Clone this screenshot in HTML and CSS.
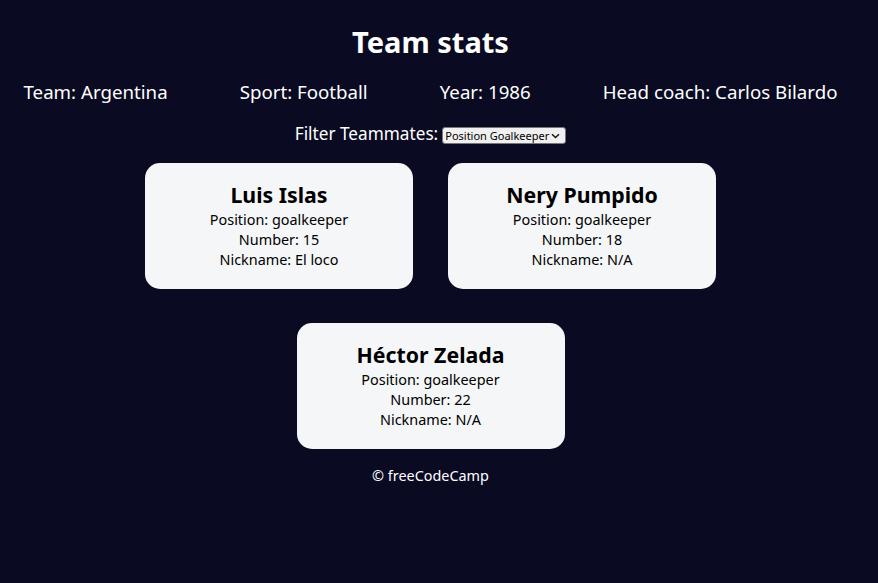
FILE: index.html
```html
<!DOCTYPE html>
<html lang="en">
<head>
<meta charset="utf-8">
<title>Team stats</title>
<link rel="stylesheet" href="styles.css">
</head>
<body>
<div class="page">
  <header class="title-container">
    <h1 class="title">Team stats</h1>
  </header>
  <div class="team-stats">
    <p>Team: <span>Argentina</span></p>
    <p>Sport: <span>Football</span></p>
    <p>Year: <span>1986</span></p>
    <p>Head coach: <span>Carlos Bilardo</span></p>
  </div>
  <div class="filter">
    <label class="options-label" for="players">Filter Teammates:</label>
    <span class="select-wrap">
      <select name="players" id="players" class="select">
        <option value="goalkeeper">Position Goalkeeper</option>
      </select>
      <svg class="chevron" width="9" height="6" viewBox="0 0 9 6" aria-hidden="true"><path d="M1 1.2 L4.5 4.6 L8 1.2" fill="none" stroke="#111" stroke-width="1.4"/></svg>
    </span>
  </div>
  <div class="cards">
    <div class="player-card">
      <h2>Luis Islas</h2>
      <p>Position: goalkeeper</p>
      <p>Number: 15</p>
      <p>Nickname: El loco</p>
    </div>
    <div class="player-card">
      <h2>Nery Pumpido</h2>
      <p>Position: goalkeeper</p>
      <p>Number: 18</p>
      <p>Nickname: N/A</p>
    </div>
    <div class="player-card">
      <h2>Héctor Zelada</h2>
      <p>Position: goalkeeper</p>
      <p>Number: 22</p>
      <p>Nickname: N/A</p>
    </div>
  </div>
  <footer class="footer">&copy; freeCodeCamp</footer>
</div>
</body>
</html>
```

FILE: styles.css
```css
*, *::before, *::after { box-sizing: border-box; }

html, body {
  margin: 0;
  background-color: #0a0a23;
}

body {
  font-family: "Noto Sans", sans-serif;
}

.page {
  width: 861px;
  padding: 20px 8px 0;
  text-align: center;
}

.title-container, .team-stats, .options-label, .footer {
  color: #ffffff;
}

.title {
  margin: 0;
  font-size: 29px;
  font-weight: 700;
  line-height: 44px;
}

.team-stats {
  display: flex;
  justify-content: center;
  gap: 72px;
  font-size: 18.7px;
  margin-top: 15px;
}

.team-stats p { margin: 0; line-height: 26px; }

.filter {
  margin-top: 17px;
  display: flex;
  justify-content: center;
  align-items: center;
  gap: 4px;
}

.options-label { font-size: 17.2px; line-height: 24px; }

.select-wrap {
  position: relative;
  display: inline-flex;
  margin-top: 2px;
}

.select {
  appearance: none;
  -webkit-appearance: none;
  font-family: "Noto Sans", sans-serif;
  font-size: 11px;
  line-height: 15px;
  width: 124px;
  height: 17px;
  padding: 0 14px 0 2px;
  background-color: #f0f0f0;
  color: #000;
  border: 1px solid #767676;
  border-radius: 3px;
  margin: 0;
}

.chevron {
  position: absolute;
  right: 6px;
  top: 6px;
  pointer-events: none;
}

.cards {
  width: 606px;
  margin: 17px auto 0;
  display: flex;
  flex-wrap: wrap;
  justify-content: center;
  column-gap: 35px;
  row-gap: 34px;
}

.player-card {
  width: 268px;
  height: 126px;
  background-color: #f5f6f7;
  border-radius: 15px;
  padding: 17px 8px 19px;
  color: #000;
}

.player-card h2 {
  margin: 0;
  font-size: 21.3px;
  line-height: 30px;
}

.player-card p {
  margin: 0;
  font-size: 14.4px;
  line-height: 20px;
}

.footer {
  margin-top: 17px;
  font-size: 14.4px;
  line-height: 20px;
}
```
